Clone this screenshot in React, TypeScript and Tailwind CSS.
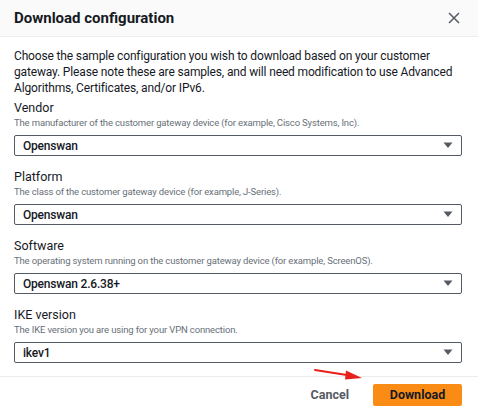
import React from "react";

const fields = [
  {
    label: "Vendor",
    hint: "The manufacturer of the customer gateway device (for example, Cisco Systems, Inc).",
    value: "Openswan",
  },
  {
    label: "Platform",
    hint: "The class of the customer gateway device (for example, J-Series).",
    value: "Openswan",
  },
  {
    label: "Software",
    hint: "The operating system running on the customer gateway device (for example, ScreenOS).",
    value: "Openswan 2.6.38+",
  },
  {
    label: "IKE version",
    hint: "The IKE version you are using for your VPN connection.",
    value: "ikev1",
  },
];

function Caret() {
  return (
    <svg width="10" height="7" viewBox="0 0 10 7" className="shrink-0">
      <path d="M0.5 0.5 H9.5 L5 6 Z" fill="#545b64" />
    </svg>
  );
}

export default function App() {
  return (
    <div
      className="w-[478px] h-[414px] bg-white text-[#16191f] flex flex-col overflow-hidden relative"
      style={{ fontFamily: "Roboto, 'Open Sans', Arial, sans-serif" }}
    >
      {/* Header */}
      <div className="h-[37px] shrink-0 bg-[#fafafa] border-b border-[#eaeded] flex items-center justify-between pl-[14px] pr-[18px]">
        <h2 className="text-[15px] font-bold leading-none">Download configuration</h2>
        <svg width="12" height="12" viewBox="0 0 12 12">
          <path d="M1 1 L11 11 M11 1 L1 11" stroke="#545b64" strokeWidth="1.5" />
        </svg>
      </div>

      {/* Body */}
      <div className="flex-1 px-[14px] pt-[11px] pr-[16px]">
        <p className="text-[12px] leading-[16px] tracking-[-0.15px]">
          Choose the sample configuration you wish to download based on your customer
          gateway. Please note these are samples, and will need modification to use Advanced
          Algorithms, Certificates, and/or IPv6.
        </p>
        <div className="mt-[4px] flex flex-col gap-[13px]">
          {fields.map((f) => (
            <div key={f.label} className="flex flex-col">
              <div className="text-[12.5px] leading-[16px]">{f.label}</div>
              <div className="text-[9.5px] leading-[14px] tracking-[-0.15px] text-[#687078]">
                {f.hint}
              </div>
              <div className="mt-[5px] h-[21px] border border-[#545b64] rounded-[2px] flex items-center justify-between pl-[8px] pr-[8px]">
                <span className="text-[12px] font-medium leading-none tracking-[-0.2px]">
                  {f.value}
                </span>
                <Caret />
              </div>
            </div>
          ))}
        </div>
      </div>

      {/* Footer */}
      <div className="h-[38px] shrink-0 border-t border-[#eaeded] flex items-start justify-end gap-[24px] pr-[16px] pt-[7px]">
        <button className="h-[22px] text-[12.5px] font-bold text-[#545b64]">Cancel</button>
        <button className="h-[22px] w-[89px] rounded-[2px] bg-[#fa8c16] text-[12.5px] font-bold text-[#16191f]">
          Download
        </button>
      </div>

      {/* Annotation arrow */}
      <svg
        className="absolute left-[312px] top-[364px]"
        width="54"
        height="20"
        viewBox="0 0 54 20"
      >
        <path d="M3 6 L38 11.5" stroke="#e8201b" strokeWidth="2" strokeLinecap="round" />
        <path d="M34 6.5 L50 14 L33 15.5 Z" fill="#e8201b" />
      </svg>
    </div>
  );
}
